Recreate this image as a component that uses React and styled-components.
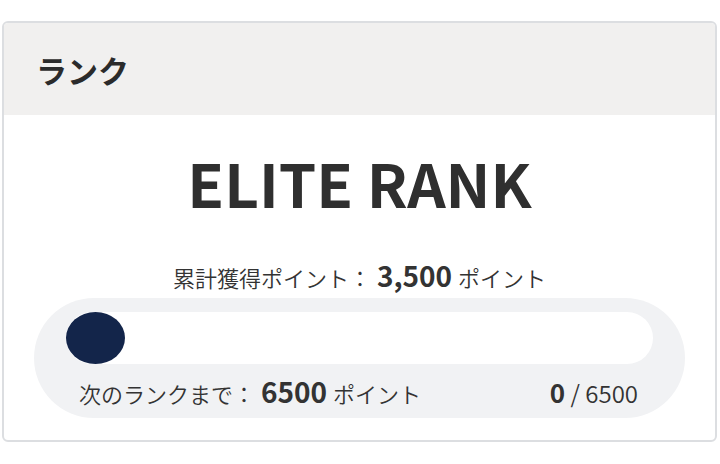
import React from "react";
import { styled, createGlobalStyle } from "styled-components";

const GlobalStyle = createGlobalStyle`
  html, body {
    margin: 0;
    padding: 0;
    background: #ffffff;
  }
  body {
    font-family: "Noto Sans CJK JP", "Noto Sans", sans-serif;
    color: #333333;
  }
`;

const Page = styled.div`
  padding: 21px 3px 0 2px;
`;

const Card = styled.section`
  border: 2px solid #dcdee1;
  border-radius: 6px;
  overflow: hidden;
  background: #ffffff;
`;

const Header = styled.div`
  display: flex;
  align-items: center;
  height: 92px;
  padding-left: 32px;
  background: #f1f0ef;
`;

const HeaderTitle = styled.h2`
  margin: 0;
  font-size: 31px;
  font-weight: 700;
  color: #2b2b2b;
`;

const Body = styled.div`
  display: flex;
  flex-direction: column;
  align-items: center;
  padding: 31px 30px 22px;
`;

const RankName = styled.h1`
  margin: 0;
  font-size: 60px;
  line-height: 72px;
  font-weight: 700;
  color: #2f2f2f;
`;

const Total = styled.p`
  margin: 42px 0 6px;
  font-size: 22px;
  line-height: 30px;
  font-weight: 350;
  color: #333333;
`;

const Strong = styled.b`
  font-size: ${(p) => p.$size || 28}px;
  line-height: 30px;
  font-weight: 700;
  margin: 0 ${(p) => (p.$gap ? 6 : 0)}px;
`;

const Meter = styled.div`
  align-self: stretch;
  height: 120px;
  box-sizing: border-box;
  padding: 14px 32px 0;
  border-radius: 60px;
  background: #f1f2f4;
`;

const Track = styled.div`
  height: 52px;
  border-radius: 26px;
  background: #ffffff;
`;

const Fill = styled.div`
  height: 100%;
  min-width: 59px;
  border-radius: 50%;
  background: #13254a;
`;

const MeterRow = styled.div`
  display: flex;
  justify-content: space-between;
  align-items: baseline;
  margin-top: 12px;
  padding: 0 15px 0 13px;
  font-size: 22px;
  line-height: 30px;
  font-weight: 350;
`;

const Count = styled.span`
  font-size: 24px;
`;

export default function App() {
  const current = 0;
  const goal = 6500;
  const pct = (current / goal) * 100;
  return (
    <Page>
      <GlobalStyle />
      <Card>
        <Header>
          <HeaderTitle>ランク</HeaderTitle>
        </Header>
        <Body>
          <RankName>ELITE RANK</RankName>
          <Total>
            累計獲得ポイント：<Strong $gap>3,500</Strong>ポイント
          </Total>
          <Meter>
            <Track>
              <Fill style={{ width: `${pct}%` }} />
            </Track>
            <MeterRow>
              <span>
                次のランクまで：<Strong $gap>6500</Strong>ポイント
              </span>
              <Count>
                <Strong $size={26}>{current}</Strong> / {goal}
              </Count>
            </MeterRow>
          </Meter>
        </Body>
      </Card>
    </Page>
  );
}
